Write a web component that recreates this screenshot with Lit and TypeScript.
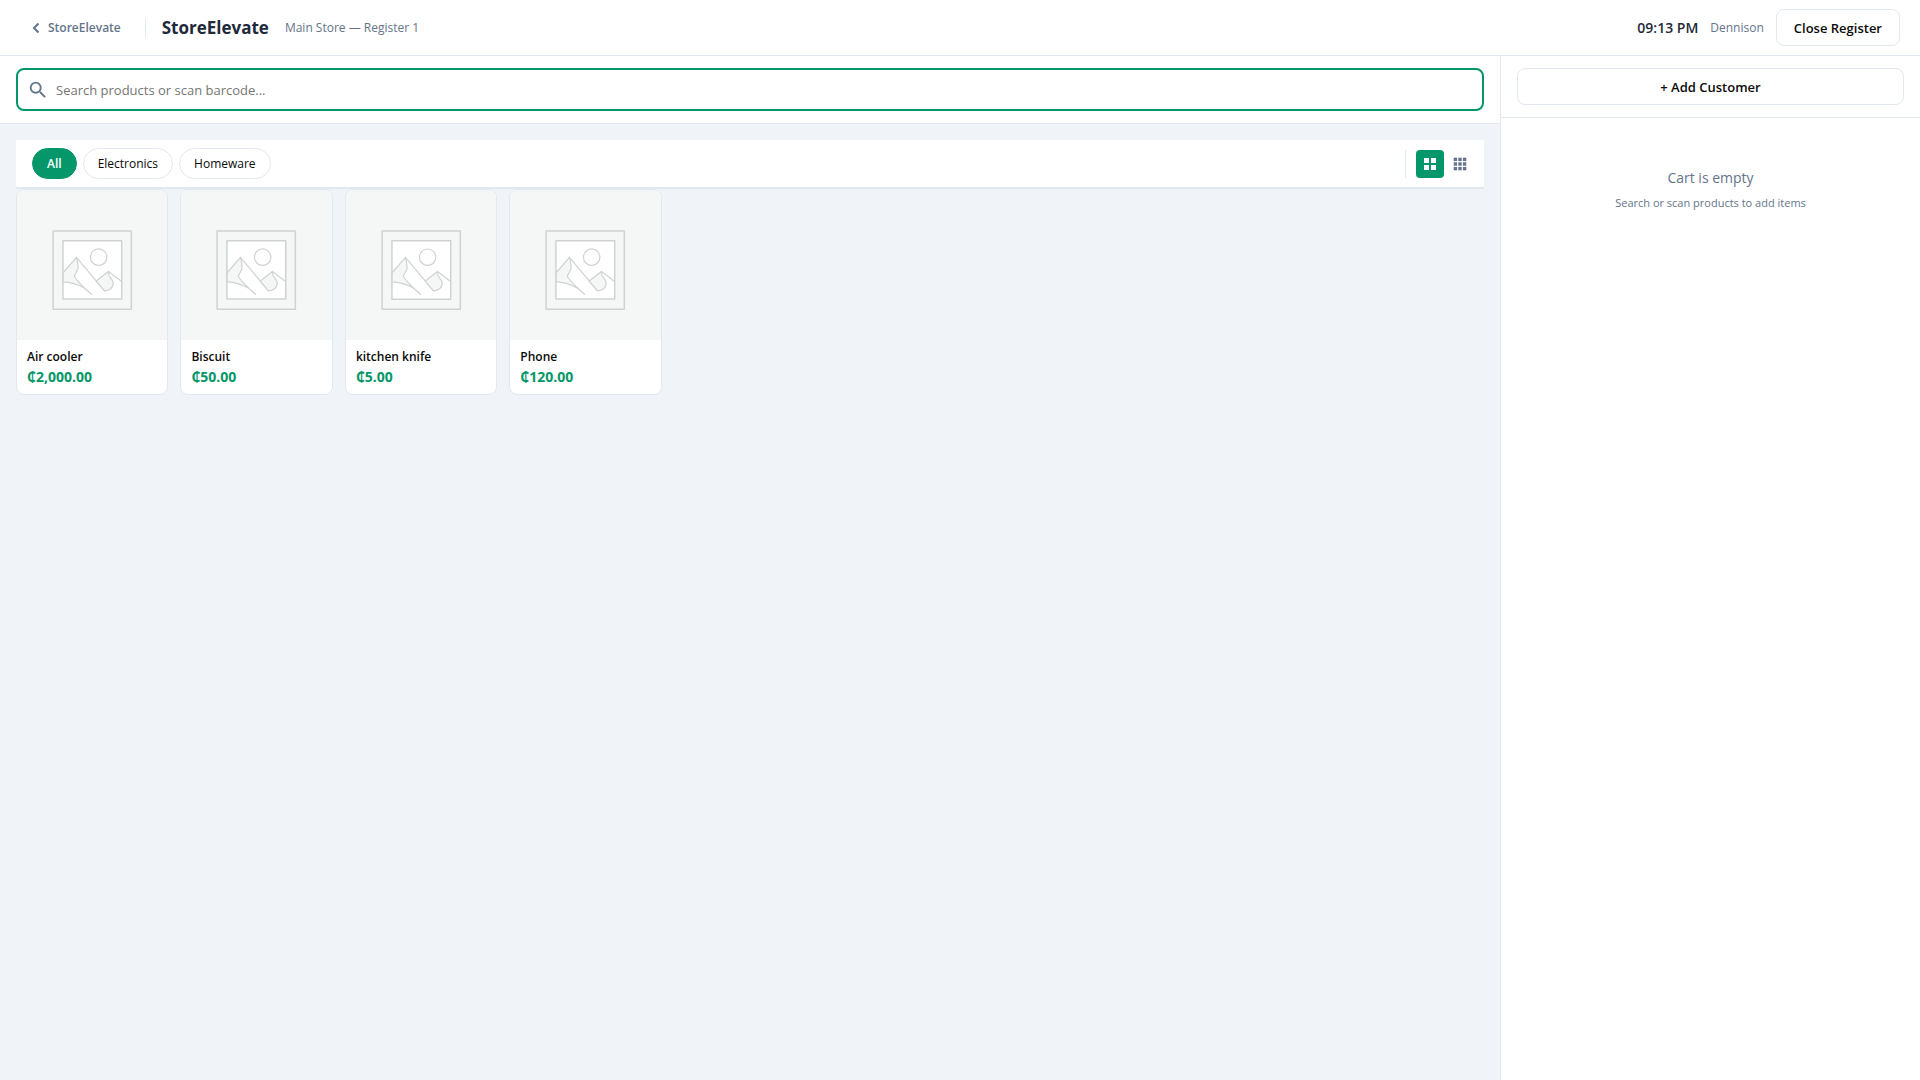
import { LitElement, html, css, svg } from "lit";
import { customElement, state } from "lit/decorators.js";

interface Product {
  name: string;
  price: string;
}

const PRODUCTS: Product[] = [
  { name: "Air cooler", price: "₵2,000.00" },
  { name: "Biscuit", price: "₵50.00" },
  { name: "kitchen knife", price: "₵5.00" },
  { name: "Phone", price: "₵120.00" },
];

const CATEGORIES = ["All", "Electronics", "Homeware"];

const placeholder = html`
  <svg class="placeholder" viewBox="0 0 150 150" aria-hidden="true">
    <g stroke="#d0d2d2" stroke-width="1.5" stroke-linejoin="round" stroke-linecap="round">
      <rect x="36" y="40.8" width="78" height="78" fill="none"></rect>
      <rect x="45.8" y="50.6" width="58.6" height="58.2" fill="#fff"></rect>
      <circle cx="81.4" cy="67" r="8.200" fill="none" stroke-width="1.2"></circle>
      <path fill="#f5f7f7" stroke-width="1.2" d="M46 82.500 59.300 67.200C60.500 72 61.300 75 60.800 78.500C59.800 82 57.300 83.500 57.300 86.500C60 90.500 64 94.500 67.500 98C60.500 94 54 91.700 46 91.600Z"></path>
      <path fill="none" stroke-width="1.2" d="M59.300 67.200 87.300 100.500M67.500 98 74.300 104"></path>
      <path fill="#f5f7f7" stroke-width="1.2" d="M79 90.800 91.200 81.200C90.200 87.300 95.800 87.800 96 93.300C95.300 97.800 91.800 100.300 87.300 100.500Z"></path>
      <path fill="none" stroke-width="1.2" d="M91.200 81.200 104 91"></path>
    </g>
  </svg>
`;

const cells = (n: number, size: number, pitch: number, start: number) =>
  Array.from({ length: n * n }, (_, i) =>
    svg`<rect x=${start + (i % n) * pitch} y=${start + Math.floor(i / n) * pitch} width=${size} height=${size}></rect>`
  );

@customElement("app-root")
export class AppRoot extends LitElement {
  @state() private category = "All";
  @state() private dense = false;

  static styles = css`
    :host {
      display: flex;
      flex-direction: column;
      min-height: 100vh;
      background: #f0f4f9;
      color: #0a0a0a;
      font-family: "Segoe UI", "Open Sans", "Noto Sans", sans-serif;
      font-size: 13px;
      line-height: 20px;
    }
    * {
      box-sizing: border-box;
    }
    button,
    input {
      font: inherit;
      color: inherit;
      margin: 0;
    }
    button {
      cursor: pointer;
    }
    .header {
      display: flex;
      align-items: center;
      justify-content: space-between;
      padding: 9px 20px;
      background: #fff;
      border-bottom: 1px solid #e2e8f0;
    }
    .group {
      display: flex;
      align-items: center;
      gap: 16px;
    }
    .group.end {
      gap: 12px;
    }
    .back {
      display: flex;
      align-items: center;
      gap: 4px;
      padding: 0 24px 0 8px;
      height: 20px;
      border-right: 1px solid #e2e8f0;
      color: #64748b;
      font-size: 12px;
      font-weight: 600;
      text-decoration: none;
    }
    .back svg {
      width: 16px;
      height: 16px;
    }
    .brand {
      margin: 0;
      font-size: 17px;
      font-weight: 700;
      line-height: 24px;
      color: #1e293b;
    }
    .muted {
      font-size: 12px;
      color: #64748b;
    }
    .clock {
      color: #1e293b;
      font-size: 14px;
      font-weight: 600;
    }
    .btn {
      padding: 0 17px;
      min-height: 37px;
      background: #fff;
      border: 1px solid #e2e8f0;
      border-radius: 8px;
      font-weight: 600;
    }
    .body {
      flex: 1;
      display: grid;
      grid-template-columns: minmax(0, 1fr) 420px;
    }
    .search {
      padding: 12px 16px;
      background: #fff;
      border-bottom: 1px solid #e2e8f0;
    }
    .field {
      display: flex;
      align-items: center;
      gap: 7px;
      height: 43px;
      padding: 0 9px;
      border: 2px solid #059669;
      border-radius: 8px;
    }
    .field svg {
      width: 22px;
      height: 22px;
      color: #64748b;
      flex: none;
    }
    .field input {
      flex: 1;
      min-width: 0;
      padding: 0;
      border: 0;
      outline: 0;
      background: none;
    }
    .field input::placeholder {
      color: #757575;
      opacity: 1;
    }
    .catalog {
      padding: 16px;
    }
    .filters {
      display: flex;
      align-items: center;
      justify-content: space-between;
      padding: 8px 10px 8px 16px;
      background: #fff;
      border-bottom: 2px solid #e2e8f0;
    }
    .pills {
      display: flex;
      gap: 6px;
    }
    .pill {
      height: 31px;
      padding: 0 14px;
      background: #fff;
      border: 1px solid #e2e8f0;
      border-radius: 16px;
      font-size: 12px;
      font-weight: 500;
    }
    .pill.on {
      background: #059669;
      border-color: #059669;
      color: #fff;
      font-weight: 600;
    }
    .views {
      display: flex;
      gap: 2px;
      padding-left: 10px;
      border-left: 1px solid #e2e8f0;
    }
    .view {
      display: grid;
      place-items: center;
      width: 28px;
      height: 28px;
      padding: 0;
      background: none;
      border: 0;
      border-radius: 4px;
      color: #64748b;
    }
    .view.on {
      background: #059669;
      color: #fff;
    }
    .view svg {
      width: 16px;
      height: 16px;
      fill: currentColor;
    }
    .products {
      display: grid;
      grid-template-columns: repeat(auto-fill, minmax(150px, 1fr));
      gap: 12px;
    }
    .card {
      display: flex;
      flex-direction: column;
      padding: 0;
      overflow: hidden;
      text-align: left;
      background: #fff;
      border: 1px solid #e2e8f0;
      border-radius: 8px;
    }
    .placeholder {
      display: block;
      width: 100%;
      aspect-ratio: 1;
      background: #f5f7f7;
    }
    .info {
      display: flex;
      flex-direction: column;
      padding: 7px 10px;
    }
    .name {
      font-size: 12px;
      font-weight: 600;
    }
    .price {
      color: #059669;
      font-size: 14px;
      font-weight: 700;
    }
    .cart {
      background: #fff;
      border-left: 1px solid #e2e8f0;
    }
    .customer {
      display: flex;
      padding: 12px 16px;
      border-bottom: 1px solid #e2e8f0;
    }
    .customer .btn {
      flex: 1;
    }
    .empty {
      padding: 48px 16px;
      text-align: center;
      color: #64748b;
    }
    .empty p {
      margin: 0;
    }
    .lead {
      font-size: 14px;
      line-height: 24px;
    }
    .hint {
      padding-top: 3px;
      font-size: 11px;
    }
  `;

  render() {
    return html`
      <header class="header">
        <div class="group">
          <a class="back" href="#">
            <svg viewBox="0 0 16 16" fill="none" stroke="currentColor" stroke-width="2" aria-hidden="true">
              <path d="M10.500 3.500 6 8l4.500 4.500"></path>
            </svg>
            StoreElevate
          </a>
          <h1 class="brand">StoreElevate</h1>
          <span class="muted">Main Store — Register 1</span>
        </div>
        <div class="group end">
          <span class="clock">09:13 PM</span>
          <span class="muted">Dennison</span>
          <button class="btn" type="button">Close Register</button>
        </div>
      </header>
      <div class="body">
        <main>
          <div class="search">
            <label class="field">
              <svg viewBox="0 0 24 24" fill="currentColor" aria-hidden="true">
                <path d="M15.500 14h-.79l-.28-.27A6.470 6.470 0 0 0 16 9.500 6.500 6.500 0 1 0 9.500 16c1.610 0 3.090-.59 4.230-1.570l.27.28v.79l5 4.990L20.490 19zm-6 0C7.010 14 5 11.990 5 9.500S7.010 5 9.500 5 14 7.010 14 9.500 11.990 14 9.500 14"></path>
              </svg>
              <input type="text" placeholder="Search products or scan barcode..." aria-label="Search products or scan barcode..." />
            </label>
          </div>
          <section class="catalog">
            <div class="filters">
              <div class="pills">
                ${CATEGORIES.map(
                  (c) => html`<button
                    type="button"
                    class="pill ${c === this.category ? "on" : ""}"
                    @click=${() => (this.category = c)}
                  >${c}</button>`
                )}
              </div>
              <div class="views">
                <button type="button" class="view ${this.dense ? "" : "on"}" aria-label="Large grid" @click=${() => (this.dense = false)}>
                  <svg viewBox="0 0 16 16">${cells(2, 5, 7, 2)}</svg>
                </button>
                <button type="button" class="view ${this.dense ? "on" : ""}" aria-label="Small grid" @click=${() => (this.dense = true)}>
                  <svg viewBox="0 0 16 16">${cells(3, 3.4, 4.6, 1.7)}</svg>
                </button>
              </div>
            </div>
            <div class="products">
              ${PRODUCTS.map(
                (p) => html`<button type="button" class="card">
                  ${placeholder}
                  <span class="info">
                    <span class="name">${p.name}</span>
                    <span class="price">${p.price}</span>
                  </span>
                </button>`
              )}
            </div>
          </section>
        </main>
        <aside class="cart">
          <div class="customer">
            <button class="btn" type="button">+ Add Customer</button>
          </div>
          <div class="empty">
            <p class="lead">Cart is empty</p>
            <p class="hint">Search or scan products to add items</p>
          </div>
        </aside>
      </div>
    `;
  }
}
